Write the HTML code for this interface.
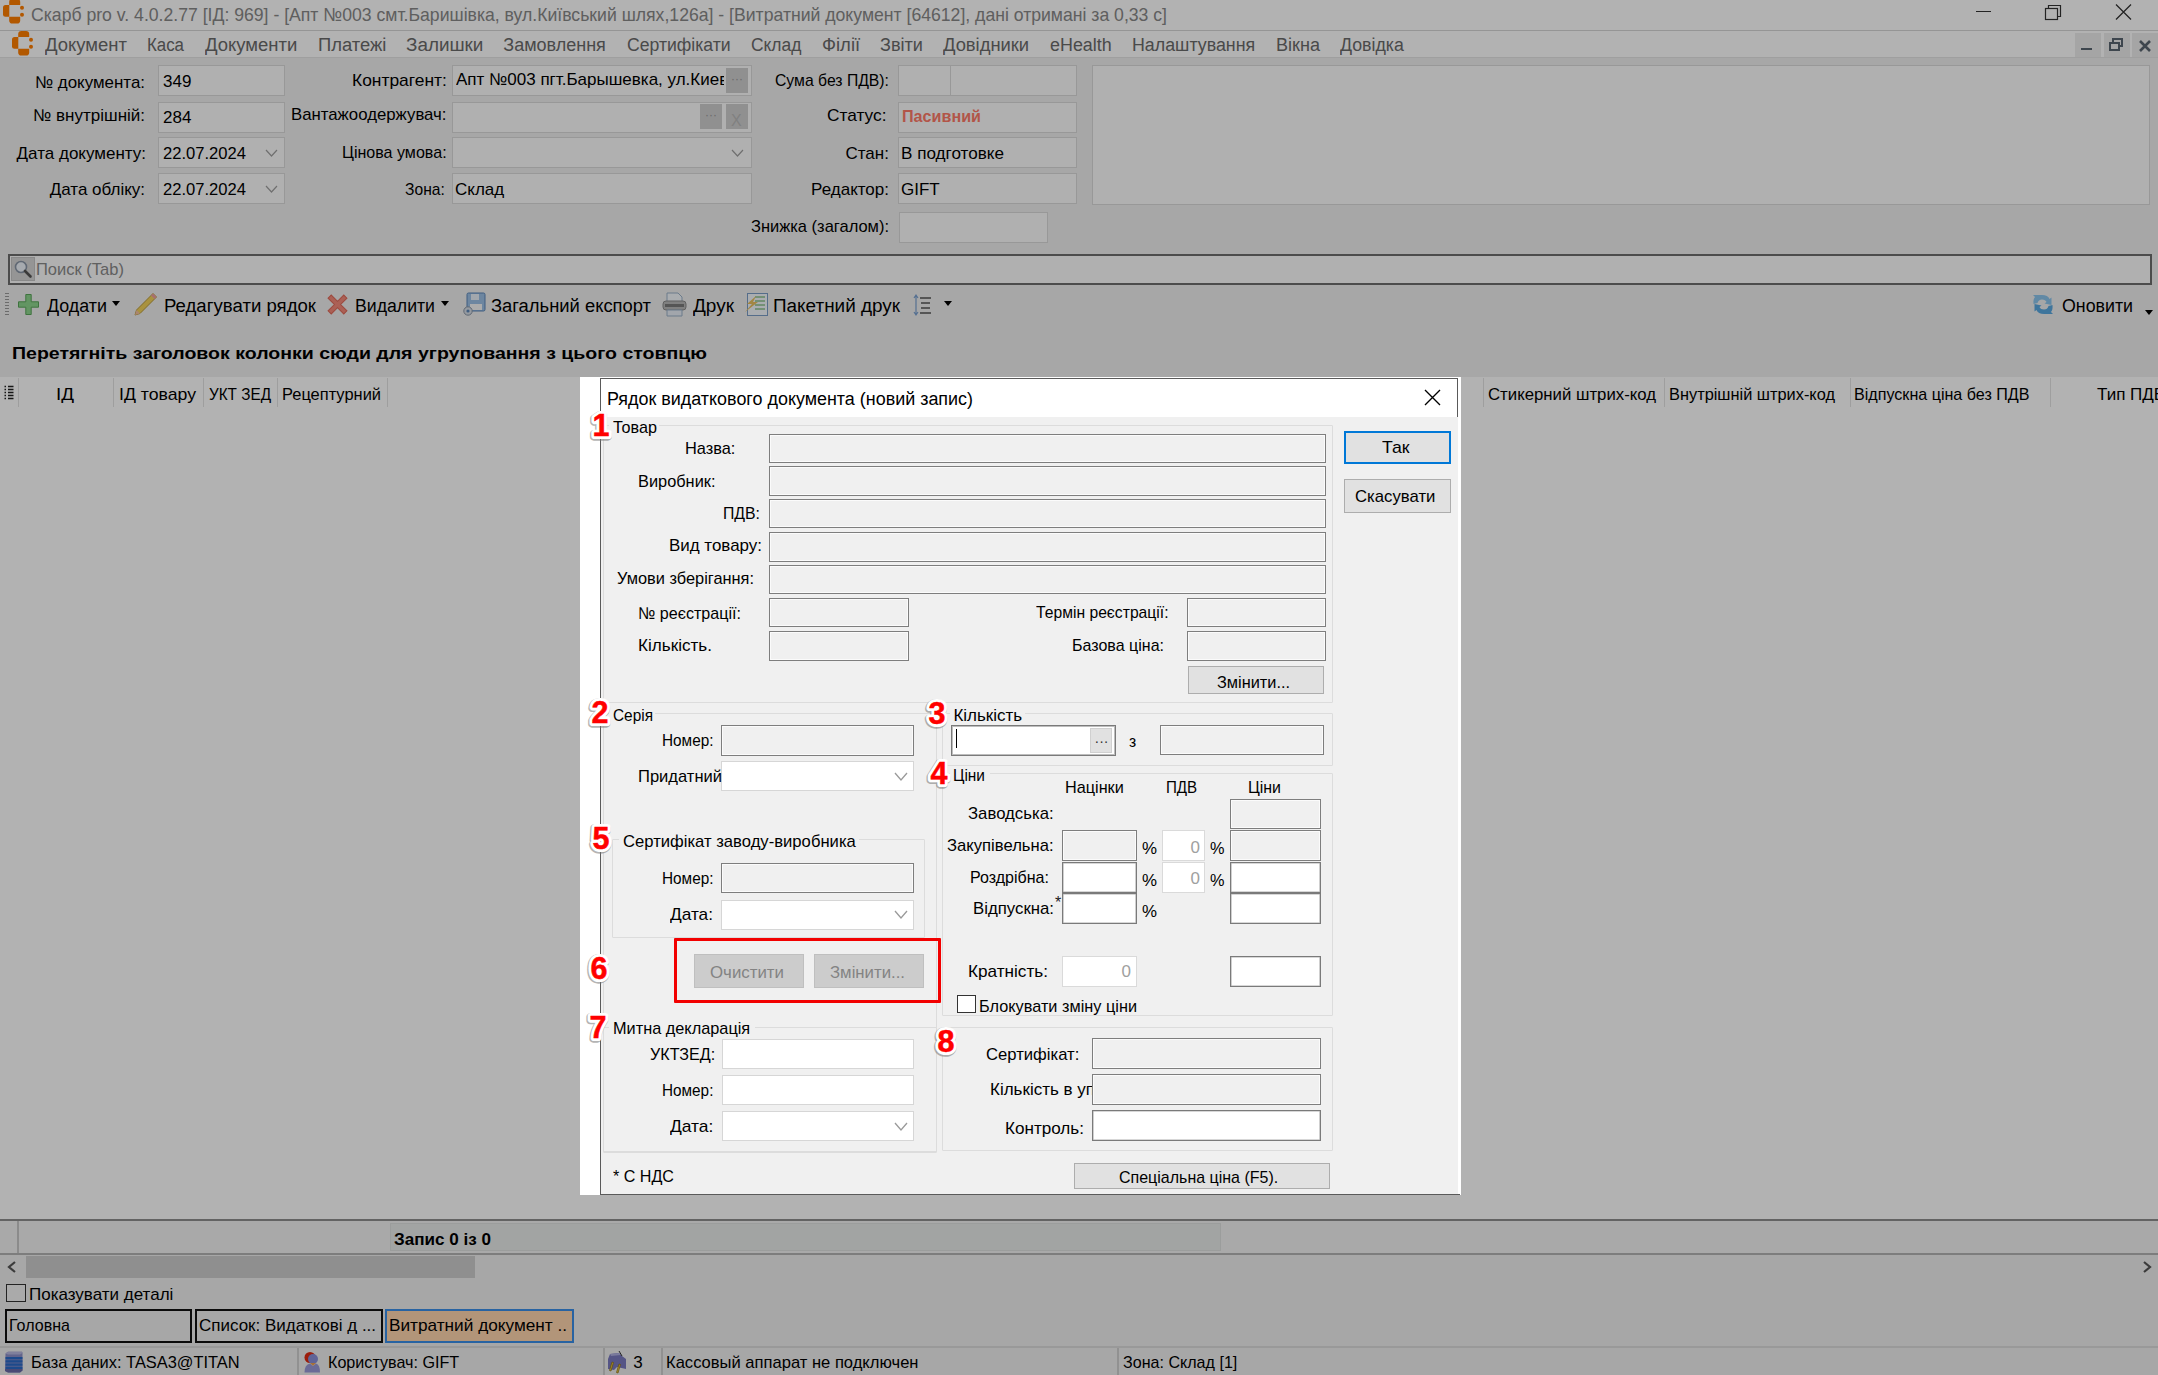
<!DOCTYPE html><html><head><meta charset="utf-8"><style>
html,body{margin:0;padding:0;}
body{width:2158px;height:1375px;position:relative;overflow:hidden;background:#f0f0f0;font-family:'Liberation Sans',sans-serif;line-height:normal;}
div{white-space:nowrap;}
</style></head><body>
<div style="position:absolute;left:0px;top:0px;width:2158px;height:30px;box-sizing:border-box;background:#fff"></div>
<div style="position:absolute;left:0px;top:30px;width:2158px;height:1px;box-sizing:border-box;background:#d6d6d6"></div>
<svg style="position:absolute;left:3.3px;top:-0.6px" width="24" height="26" viewBox="0 0 24 26"><path d="M6.2 6 V3 Q6.2 0 9.4 0 H14 Q17.2 0 17.2 3 V6z" fill="#ff7e00"/><path d="M6.3 5.9 V17.8 H2.5 Q0 17.8 0 15.3 V8.4 Q0 5.9 2.5 5.9z" fill="#ff7e00"/><path d="M6.2 17.7 V21.4 Q6.2 24.5 9.4 24.5 H14 Q17.2 24.5 17.2 21.4 V17.7z" fill="#ff7e00"/><rect x="17.0" y="6.8" width="4" height="4" rx="2" fill="#ff7e00"/><rect x="17.0" y="13.8" width="4" height="4" rx="2" fill="#ff7e00"/></svg>
<div id="t0" style="position:absolute;left:31.0px;top:4px;font-size:19px;font-weight:normal;color:#888888;transform:scaleX(0.9276);transform-origin:0 0;">Скарб pro v. 4.0.2.77 [ІД: 969] - [Апт №003 смт.Баришівка, вул.Київський шлях,126а] - [Витратний документ [64612], дані отримані за 0,33 с]</div>
<div style="position:absolute;left:1976px;top:11px;width:15px;height:1px;box-sizing:border-box;background:#333"></div>
<svg style="position:absolute;left:2043px;top:3px" width="20" height="18" viewBox="0 0 20 18"><rect x="2.5" y="5.5" width="12" height="11" fill="none" stroke="#333" stroke-width="1.2"/><path d="M5.5 5.5 V2.5 H17.5 V13.5 H14.5" fill="none" stroke="#333" stroke-width="1.2"/></svg>
<svg style="position:absolute;left:2114px;top:3px" width="19" height="18" viewBox="0 0 19 18"><path d="M2 1.5 L17 16.5 M17 1.5 L2 16.5" stroke="#333" stroke-width="1.3"/></svg>
<div style="position:absolute;left:0px;top:31px;width:2158px;height:26px;box-sizing:border-box;background:#fff"></div>
<svg style="position:absolute;left:11.8px;top:31.2px" width="24" height="26" viewBox="0 0 24 26"><path d="M6.2 6 V3 Q6.2 0 9.4 0 H14 Q17.2 0 17.2 3 V6z" fill="#ff7e00"/><path d="M6.3 5.9 V17.8 H2.5 Q0 17.8 0 15.3 V8.4 Q0 5.9 2.5 5.9z" fill="#ff7e00"/><path d="M6.2 17.7 V21.4 Q6.2 24.5 9.4 24.5 H14 Q17.2 24.5 17.2 21.4 V17.7z" fill="#ff7e00"/><rect x="17.0" y="6.8" width="4" height="4" rx="2" fill="#ff7e00"/><rect x="17.0" y="13.8" width="4" height="4" rx="2" fill="#ff7e00"/></svg>
<div id="t1" style="position:absolute;left:44.5px;top:35px;font-size:18px;font-weight:normal;color:#6a6a6a;transform:scaleX(1.0268);transform-origin:0 0;">Документ</div>
<div id="t2" style="position:absolute;left:147.0px;top:35px;font-size:18px;font-weight:normal;color:#6a6a6a;transform:scaleX(0.9363);transform-origin:0 0;">Каса</div>
<div id="t3" style="position:absolute;left:204.5px;top:35px;font-size:18px;font-weight:normal;color:#6a6a6a;transform:scaleX(1.0266);transform-origin:0 0;">Документи</div>
<div id="t4" style="position:absolute;left:317.5px;top:35px;font-size:18px;font-weight:normal;color:#6a6a6a;transform:scaleX(1.0216);transform-origin:0 0;">Платежі</div>
<div id="t5" style="position:absolute;left:405.9px;top:35px;font-size:18px;font-weight:normal;color:#6a6a6a;transform:scaleX(1.0486);transform-origin:0 0;">Залишки</div>
<div id="t6" style="position:absolute;left:503.3px;top:35px;font-size:18px;font-weight:normal;color:#6a6a6a;">Замовлення</div>
<div id="t7" style="position:absolute;left:626.8px;top:35px;font-size:18px;font-weight:normal;color:#6a6a6a;transform:scaleX(0.9790);transform-origin:0 0;">Сертифікати</div>
<div id="t8" style="position:absolute;left:751.2px;top:35px;font-size:18px;font-weight:normal;color:#6a6a6a;transform:scaleX(0.9656);transform-origin:0 0;">Склад</div>
<div id="t9" style="position:absolute;left:821.9px;top:35px;font-size:18px;font-weight:normal;color:#6a6a6a;transform:scaleX(1.0245);transform-origin:0 0;">Філії</div>
<div id="t10" style="position:absolute;left:879.5px;top:35px;font-size:18px;font-weight:normal;color:#6a6a6a;transform:scaleX(1.0039);transform-origin:0 0;">Звіти</div>
<div id="t11" style="position:absolute;left:943.1px;top:35px;font-size:18px;font-weight:normal;color:#6a6a6a;transform:scaleX(1.0201);transform-origin:0 0;">Довідники</div>
<div id="t12" style="position:absolute;left:1049.8px;top:35px;font-size:18px;font-weight:normal;color:#6a6a6a;transform:scaleX(0.9944);transform-origin:0 0;">eHealth</div>
<div id="t13" style="position:absolute;left:1132.2px;top:35px;font-size:18px;font-weight:normal;color:#6a6a6a;transform:scaleX(0.9902);transform-origin:0 0;">Налаштування</div>
<div id="t14" style="position:absolute;left:1276.1px;top:35px;font-size:18px;font-weight:normal;color:#6a6a6a;transform:scaleX(1.0036);transform-origin:0 0;">Вікна</div>
<div id="t15" style="position:absolute;left:1340.1px;top:35px;font-size:18px;font-weight:normal;color:#6a6a6a;transform:scaleX(0.9853);transform-origin:0 0;">Довідка</div>
<div style="position:absolute;left:2075px;top:33px;width:26px;height:25px;box-sizing:border-box;background:#ececec"></div>
<div style="position:absolute;left:2104px;top:33px;width:26px;height:25px;box-sizing:border-box;background:#ececec"></div>
<div style="position:absolute;left:2132px;top:33px;width:26px;height:25px;box-sizing:border-box;background:#ececec"></div>
<div style="position:absolute;left:2081px;top:47.5px;width:11px;height:2.6px;box-sizing:border-box;background:#5a6570"></div>
<svg style="position:absolute;left:2108px;top:37px" width="18" height="16" viewBox="0 0 18 16"><rect x="2" y="6" width="9" height="7" fill="none" stroke="#5a6570" stroke-width="2"/><path d="M5 5 V2 H14 V9 H12" fill="none" stroke="#5a6570" stroke-width="2"/></svg>
<svg style="position:absolute;left:2138px;top:39px" width="14" height="14" viewBox="0 0 14 14"><path d="M2 2 L12 12 M12 2 L2 12" stroke="#5a6570" stroke-width="2.6"/></svg>
<div style="position:absolute;left:0px;top:57px;width:2158px;height:1318px;box-sizing:border-box;background:#f0f0f0"></div>
<div style="position:absolute;left:0px;top:57px;width:2158px;height:1px;box-sizing:border-box;background:#e4e4e4"></div>
<div style="position:absolute;left:158px;top:65px;width:127px;height:31px;box-sizing:border-box;background:#fdfdfd;border:1.5px solid #dadada;"></div>
<div style="position:absolute;left:158px;top:101.5px;width:127px;height:31px;box-sizing:border-box;background:#fdfdfd;border:1.5px solid #dadada;"></div>
<div style="position:absolute;left:158px;top:137px;width:127px;height:31px;box-sizing:border-box;background:#fdfdfd;border:1.5px solid #dadada;"></div>
<div style="position:absolute;left:158px;top:173px;width:127px;height:31px;box-sizing:border-box;background:#fdfdfd;border:1.5px solid #dadada;"></div>
<div id="t16" style="position:absolute;left:35.0px;top:72.7px;font-size:17px;font-weight:normal;color:#000;transform:scaleX(0.9948);transform-origin:0 0;">№ документа:</div>
<div id="t17" style="position:absolute;left:33.1px;top:105.8px;font-size:17px;font-weight:normal;color:#000;">№ внутрішній:</div>
<div id="t18" style="position:absolute;left:16.6px;top:143.9px;font-size:17px;font-weight:normal;color:#000;">Дата документу:</div>
<div id="t19" style="position:absolute;left:49.7px;top:180px;font-size:17px;font-weight:normal;color:#000;">Дата обліку:</div>
<div id="t20" style="position:absolute;left:163.0px;top:72px;font-size:17px;font-weight:normal;color:#000;">349</div>
<div id="t21" style="position:absolute;left:163.0px;top:107.5px;font-size:17px;font-weight:normal;color:#000;">284</div>
<div id="t22" style="position:absolute;left:163.0px;top:144px;font-size:17px;font-weight:normal;color:#000;transform:scaleX(0.9754);transform-origin:0 0;">22.07.2024</div>
<div id="t23" style="position:absolute;left:163.0px;top:180px;font-size:17px;font-weight:normal;color:#000;transform:scaleX(0.9754);transform-origin:0 0;">22.07.2024</div>
<svg style="position:absolute;left:265px;top:149px" width="13" height="8" viewBox="0 0 13 8"><path d="M1 1 L6.5 7 L12 1" fill="none" stroke="#a0a0a0" stroke-width="1.2"/></svg>
<svg style="position:absolute;left:265px;top:185px" width="13" height="8" viewBox="0 0 13 8"><path d="M1 1 L6.5 7 L12 1" fill="none" stroke="#a0a0a0" stroke-width="1.2"/></svg>
<div style="position:absolute;left:451.5px;top:65px;width:300px;height:31px;box-sizing:border-box;background:#fdfdfd;border:1.5px solid #dadada;"></div>
<div style="position:absolute;left:451.5px;top:101.5px;width:300px;height:31px;box-sizing:border-box;background:#fdfdfd;border:1.5px solid #dadada;"></div>
<div style="position:absolute;left:451.5px;top:137px;width:300px;height:31px;box-sizing:border-box;background:#fdfdfd;border:1.5px solid #dadada;"></div>
<div style="position:absolute;left:451.5px;top:173px;width:300px;height:31px;box-sizing:border-box;background:#fdfdfd;border:1.5px solid #dadada;"></div>
<div id="t24" style="position:absolute;left:352.0px;top:71.2px;font-size:17px;font-weight:normal;color:#000;transform:scaleX(1.0235);transform-origin:0 0;">Контрагент:</div>
<div id="t25" style="position:absolute;left:290.8px;top:105.2px;font-size:17px;font-weight:normal;color:#000;transform:scaleX(0.9870);transform-origin:0 0;">Вантажоодержувач:</div>
<div id="t26" style="position:absolute;left:341.7px;top:142.6px;font-size:17px;font-weight:normal;color:#000;transform:scaleX(0.9450);transform-origin:0 0;">Цінова умова:</div>
<div id="t27" style="position:absolute;left:405.0px;top:180px;font-size:17px;font-weight:normal;color:#000;transform:scaleX(0.9192);transform-origin:0 0;">Зона:</div>
<div style="position:absolute;left:456px;top:66px;width:268px;height:28px;overflow:hidden"><div style="position:absolute;left:0;top:4px;font-size:17px;color:#000">Апт №003 пгт.Барышевка, ул.Киевский шлях</div></div>
<div id="t28" style="position:absolute;left:455.0px;top:180px;font-size:17px;font-weight:normal;color:#000;">Склад</div>
<div style="position:absolute;left:726px;top:68px;width:22px;height:25px;box-sizing:border-box;background:#cfcfcf"></div>
<div id="t29" style="position:absolute;left:731.0px;top:72px;font-size:12px;font-weight:normal;color:#9a9a9a;">···</div>
<div style="position:absolute;left:700px;top:104px;width:22px;height:25px;box-sizing:border-box;background:#cfcfcf"></div>
<div id="t30" style="position:absolute;left:705.0px;top:108px;font-size:12px;font-weight:normal;color:#9a9a9a;">···</div>
<div style="position:absolute;left:726px;top:104px;width:22px;height:25px;box-sizing:border-box;background:#cfcfcf"></div>
<div id="t31" style="position:absolute;left:731.0px;top:112px;font-size:16px;font-weight:normal;color:#b8b8b8;">X</div>
<svg style="position:absolute;left:731px;top:149px" width="13" height="8" viewBox="0 0 13 8"><path d="M1 1 L6.5 7 L12 1" fill="none" stroke="#a0a0a0" stroke-width="1.2"/></svg>
<div style="position:absolute;left:897.5px;top:65px;width:179px;height:31px;box-sizing:border-box;background:#fdfdfd;border:1.5px solid #dadada;"></div>
<div style="position:absolute;left:897.5px;top:101.5px;width:179px;height:31px;box-sizing:border-box;background:#fdfdfd;border:1.5px solid #dadada;"></div>
<div style="position:absolute;left:897.5px;top:137px;width:179px;height:31px;box-sizing:border-box;background:#fdfdfd;border:1.5px solid #dadada;"></div>
<div style="position:absolute;left:897.5px;top:173px;width:179px;height:31px;box-sizing:border-box;background:#fdfdfd;border:1.5px solid #dadada;"></div>
<div style="position:absolute;left:949.5px;top:66px;width:1.5px;height:29px;box-sizing:border-box;background:#dadada"></div>
<div id="t32" style="position:absolute;left:775.0px;top:71.3px;font-size:17px;font-weight:normal;color:#000;transform:scaleX(0.9264);transform-origin:0 0;">Сума без ПДВ):</div>
<div id="t33" style="position:absolute;left:827.0px;top:106.1px;font-size:17px;font-weight:normal;color:#000;transform:scaleX(1.0176);transform-origin:0 0;">Статус:</div>
<div id="t34" style="position:absolute;left:845.5px;top:144px;font-size:17px;font-weight:normal;color:#000;">Стан:</div>
<div id="t35" style="position:absolute;left:811.1px;top:180px;font-size:17px;font-weight:normal;color:#000;">Редактор:</div>
<div id="t36" style="position:absolute;left:751.0px;top:217px;font-size:17px;font-weight:normal;color:#000;transform:scaleX(0.9695);transform-origin:0 0;">Знижка (загалом):</div>
<div style="position:absolute;left:899px;top:212px;width:149px;height:31px;box-sizing:border-box;background:#fdfdfd;border:1.5px solid #dadada;"></div>
<div id="t37" style="position:absolute;left:901.7px;top:106.8px;font-size:17px;font-weight:bold;color:#ff7a68;transform:scaleX(0.9495);transform-origin:0 0;">Пасивний</div>
<div id="t38" style="position:absolute;left:901.0px;top:144px;font-size:17px;font-weight:normal;color:#000;transform:scaleX(1.0064);transform-origin:0 0;">В подготовке</div>
<div id="t39" style="position:absolute;left:901.0px;top:180px;font-size:17px;font-weight:normal;color:#000;">GIFT</div>
<div style="position:absolute;left:1092px;top:65px;width:1058px;height:140px;box-sizing:border-box;background:#fdfdfd;border:1.5px solid #dadada;"></div>
<div style="position:absolute;left:8px;top:254px;width:2144px;height:31px;box-sizing:border-box;background:#fdfdfd;border:2px solid #6e6e6e;"></div>
<div style="position:absolute;left:11px;top:257px;width:24px;height:24px;box-sizing:border-box;background:#d6d6d6;border:1px solid #c4c4c4"></div>
<svg style="position:absolute;left:13px;top:259px" width="20" height="20" viewBox="0 0 20 20"><circle cx="8" cy="8" r="5.5" fill="#eef4fb" stroke="#8a96a6" stroke-width="1.6"/><path d="M12 12 L17.5 17.5" stroke="#555" stroke-width="2.6" stroke-linecap="round"/></svg>
<div id="t40" style="position:absolute;left:36.0px;top:260px;font-size:17px;font-weight:normal;color:#8a8a8a;transform:scaleX(0.9717);transform-origin:0 0;">Поиск (Tab)</div>
<div style="position:absolute;left:5px;top:293px;width:4px;height:1px;box-sizing:border-box;background:#9a9a9a"></div>
<div style="position:absolute;left:5px;top:296px;width:4px;height:1px;box-sizing:border-box;background:#9a9a9a"></div>
<div style="position:absolute;left:5px;top:299px;width:4px;height:1px;box-sizing:border-box;background:#9a9a9a"></div>
<div style="position:absolute;left:5px;top:302px;width:4px;height:1px;box-sizing:border-box;background:#9a9a9a"></div>
<div style="position:absolute;left:5px;top:305px;width:4px;height:1px;box-sizing:border-box;background:#9a9a9a"></div>
<div style="position:absolute;left:5px;top:308px;width:4px;height:1px;box-sizing:border-box;background:#9a9a9a"></div>
<div style="position:absolute;left:5px;top:311px;width:4px;height:1px;box-sizing:border-box;background:#9a9a9a"></div>
<div style="position:absolute;left:5px;top:314px;width:4px;height:1px;box-sizing:border-box;background:#9a9a9a"></div>
<svg style="position:absolute;left:18px;top:294px" width="21" height="21" viewBox="0 0 21 21"><path d="M7.8 0.5 h5.4 v7.3 h7.3 v5.4 h-7.3 v7.3 h-5.4 v-7.3 h-7.3 v-5.4 h7.3z" fill="#8fd68f" stroke="#5aa55a" stroke-width="1"/></svg>
<div id="t41" style="position:absolute;left:46.5px;top:296px;font-size:18px;font-weight:normal;color:#000;transform:scaleX(0.9928);transform-origin:0 0;">Додати</div>
<svg style="position:absolute;left:112px;top:301px" width="8" height="5" viewBox="0 0 8 5"><path d="M0 0 H8 L4.0 5z" fill="#000"/></svg>
<svg style="position:absolute;left:133px;top:292px" width="25" height="25" viewBox="0 0 25 25"><path d="M20 1.5 L23.5 5 L7 21.5 L2 23 L3.5 18z" fill="#f2d25a" stroke="#b89a3a" stroke-width="1"/><path d="M20 1.5 L23.5 5 L21.5 7 L18 3.5z" fill="#f0a0a0"/><path d="M2 23 L3.5 18 L7 21.5z" fill="#f4c0a0"/></svg>
<div id="t42" style="position:absolute;left:163.5px;top:296px;font-size:18px;font-weight:normal;color:#000;transform:scaleX(1.0330);transform-origin:0 0;">Редагувати рядок</div>
<svg style="position:absolute;left:326px;top:293px" width="23" height="23" viewBox="0 0 22 22"><path d="M2 5 L5 2 L11 8 L17 2 L20 5 L14 11 L20 17 L17 20 L11 14 L5 20 L2 17 L8 11z" fill="#f58a7a" stroke="#e06a5a" stroke-width="1"/></svg>
<div id="t43" style="position:absolute;left:355.4px;top:296px;font-size:18px;font-weight:normal;color:#000;transform:scaleX(0.9823);transform-origin:0 0;">Видалити</div>
<svg style="position:absolute;left:441px;top:301px" width="8" height="5" viewBox="0 0 8 5"><path d="M0 0 H8 L4.0 5z" fill="#000"/></svg>
<svg style="position:absolute;left:462px;top:292px" width="24" height="25" viewBox="0 0 24 25"><rect x="5" y="1" width="18" height="18" rx="1.5" fill="#9cc0e6" stroke="#5b86b8" stroke-width="1"/><rect x="9" y="2" width="8" height="6" fill="#e8f0f8"/><rect x="8" y="12" width="12" height="6" fill="#f6f6f6"/><circle cx="6" cy="19" r="4.2" fill="#d6dde6" stroke="#8a96a6" stroke-width="1"/><circle cx="6" cy="19" r="1.6" fill="#5b86b8"/></svg>
<div id="t44" style="position:absolute;left:491.2px;top:296px;font-size:18px;font-weight:normal;color:#000;transform:scaleX(1.0210);transform-origin:0 0;">Загальний експорт</div>
<svg style="position:absolute;left:662px;top:292px" width="25" height="25" viewBox="0 0 25 25"><path d="M5 1 H16 L20 5 V10 H5z" fill="#f4f8fc" stroke="#9ab0c8" stroke-width="1"/><rect x="1" y="9" width="23" height="9" rx="3" fill="#b8b8b8" stroke="#8a8a8a" stroke-width="1"/><rect x="3" y="12" width="19" height="3" fill="#7a7a7a"/><path d="M5 18 H20 V24 H5z" fill="#e8eef6" stroke="#9ab0c8" stroke-width="1"/></svg>
<div id="t45" style="position:absolute;left:692.5px;top:296px;font-size:18px;font-weight:normal;color:#000;transform:scaleX(1.0547);transform-origin:0 0;">Друк</div>
<svg style="position:absolute;left:744px;top:293px" width="25" height="24" viewBox="0 0 25 24"><rect x="3.5" y="0.5" width="20" height="22" fill="#f4f8fc" stroke="#7a9cc6" stroke-width="1"/><path d="M11 4 H21 M11 8 H21 M11 12 H21 M11 16 H21" stroke="#8cc08c" stroke-width="1.5"/><path d="M12 3 L3 11 H8 L1 19 L14 9 H9z" fill="#e8c060"/></svg>
<div id="t46" style="position:absolute;left:773.4px;top:296px;font-size:18px;font-weight:normal;color:#000;transform:scaleX(1.0503);transform-origin:0 0;">Пакетний друк</div>
<svg style="position:absolute;left:913px;top:293px" width="20" height="24" viewBox="0 0 20 24"><path d="M3 2 V22 M1 5 L3 2 L5 5 M1 19 L3 22 L5 19" fill="none" stroke="#7aa0d0" stroke-width="1.2"/><path d="M7 5 H18 M8 10 H17 M8 15 H17 M7 20 H18" stroke="#555" stroke-width="1.6"/></svg>
<svg style="position:absolute;left:944px;top:301px" width="8" height="5" viewBox="0 0 8 5"><path d="M0 0 H8 L4.0 5z" fill="#000"/></svg>
<svg style="position:absolute;left:2032px;top:293px" width="22" height="23" viewBox="0 0 22 23"><path d="M1 2 H10 Q16 2 17.5 6 L19.5 4.5 L19.5 12 L12.5 10.5 L14.5 9 Q13.5 6.5 10 6.5 Q6.5 6.5 5.5 10 L1.5 11 Q1 6 3 4z" fill="#8cc4ec"/><path d="M21 21 H12 Q6 21 4.5 17 L2.5 18.5 L2.5 11 L9.5 12.5 L7.5 14 Q8.5 16.5 12 16.5 Q15.5 16.5 16.5 13 L20.5 12 Q21 17 19 19z" fill="#5aa8e0"/></svg>
<div id="t47" style="position:absolute;left:2061.6px;top:296px;font-size:18px;font-weight:normal;color:#000;transform:scaleX(0.9878);transform-origin:0 0;">Оновити</div>
<svg style="position:absolute;left:2145px;top:310px" width="8" height="5" viewBox="0 0 8 5"><path d="M0 0 H8 L4.0 5z" fill="#000"/></svg>
<div id="t48" style="position:absolute;left:12.3px;top:344.3px;font-size:17px;font-weight:bold;color:#000;transform:scaleX(1.1483);transform-origin:0 0;">Перетягніть заголовок колонки сюди для угруповання з цього стовпцю</div>
<div style="position:absolute;left:0px;top:377px;width:2158px;height:842px;box-sizing:border-box;background:#fff"></div>
<div style="position:absolute;left:17.5px;top:378px;width:1.2px;height:29px;box-sizing:border-box;background:#e2e2e2"></div>
<div style="position:absolute;left:113px;top:378px;width:1.2px;height:29px;box-sizing:border-box;background:#e2e2e2"></div>
<div style="position:absolute;left:203px;top:378px;width:1.2px;height:29px;box-sizing:border-box;background:#e2e2e2"></div>
<div style="position:absolute;left:276.5px;top:378px;width:1.2px;height:29px;box-sizing:border-box;background:#e2e2e2"></div>
<div style="position:absolute;left:387px;top:378px;width:1.2px;height:29px;box-sizing:border-box;background:#e2e2e2"></div>
<div style="position:absolute;left:1482.5px;top:378px;width:1.2px;height:29px;box-sizing:border-box;background:#e2e2e2"></div>
<div style="position:absolute;left:1663.5px;top:378px;width:1.2px;height:29px;box-sizing:border-box;background:#e2e2e2"></div>
<div style="position:absolute;left:1850px;top:378px;width:1.2px;height:29px;box-sizing:border-box;background:#e2e2e2"></div>
<div style="position:absolute;left:2049.5px;top:378px;width:1.2px;height:29px;box-sizing:border-box;background:#e2e2e2"></div>
<svg style="position:absolute;left:4px;top:385px" width="10" height="16" viewBox="0 0 10 16"><path d="M0.5 1.5 H2 M0.5 4.5 H2 M0.5 7.5 H2 M0.5 10.5 H2 M0.5 13.5 H2 M4 1.5 H9.5 M4 4.5 H9.5 M4 7.5 H9.5 M4 10.5 H9.5 M4 13.5 H9.5" stroke="#222" stroke-width="1.6"/></svg>
<div id="t49" style="position:absolute;left:55.6px;top:385px;font-size:17px;font-weight:normal;color:#000;transform:scaleX(1.1077);transform-origin:0 0;">ІД</div>
<div id="t50" style="position:absolute;left:118.6px;top:385px;font-size:17px;font-weight:normal;color:#000;transform:scaleX(1.0394);transform-origin:0 0;">ІД товару</div>
<div id="t51" style="position:absolute;left:208.5px;top:385px;font-size:17px;font-weight:normal;color:#000;transform:scaleX(0.8994);transform-origin:0 0;">УКТ ЗЕД</div>
<div id="t52" style="position:absolute;left:281.7px;top:385px;font-size:17px;font-weight:normal;color:#000;transform:scaleX(0.9670);transform-origin:0 0;">Рецептурний</div>
<div id="t53" style="position:absolute;left:1488.0px;top:385px;font-size:17px;font-weight:normal;color:#000;transform:scaleX(0.9861);transform-origin:0 0;">Стикерний штрих-код</div>
<div id="t54" style="position:absolute;left:1669.0px;top:385px;font-size:17px;font-weight:normal;color:#000;transform:scaleX(0.9627);transform-origin:0 0;">Внутрішній штрих-код</div>
<div id="t55" style="position:absolute;left:1854.0px;top:385px;font-size:17px;font-weight:normal;color:#000;transform:scaleX(0.9468);transform-origin:0 0;">Відпускна ціна без ПДВ</div>
<div id="t56" style="position:absolute;left:2097.0px;top:385px;font-size:17px;font-weight:normal;color:#000;">Тип ПДВ</div>
<div style="position:absolute;left:0px;top:1218.5px;width:2158px;height:2.5px;box-sizing:border-box;background:#8e8e8e"></div>
<div style="position:absolute;left:0px;top:1221px;width:2158px;height:32px;box-sizing:border-box;background:#f3f3f3"></div>
<div style="position:absolute;left:17px;top:1221px;width:1.5px;height:32px;box-sizing:border-box;background:#c8c8c8"></div>
<div style="position:absolute;left:390px;top:1223px;width:831px;height:28px;box-sizing:border-box;background:#e9ebea;border:1px solid #dfe1e0"></div>
<div id="t57" style="position:absolute;left:394.0px;top:1230px;font-size:17px;font-weight:bold;color:#000;transform:scaleX(1.0049);transform-origin:0 0;">Запис 0 із 0</div>
<div style="position:absolute;left:0px;top:1253px;width:2158px;height:1.5px;box-sizing:border-box;background:#b4b4b4"></div>
<div style="position:absolute;left:26px;top:1256px;width:449px;height:22px;box-sizing:border-box;background:#cdcdcd"></div>
<svg style="position:absolute;left:6px;top:1261px" width="11" height="12" viewBox="0 0 11 12"><path d="M9 1 L3 6 L9 11" fill="none" stroke="#555" stroke-width="2.2"/></svg>
<svg style="position:absolute;left:2142px;top:1261px" width="11" height="12" viewBox="0 0 11 12"><path d="M2 1 L8 6 L2 11" fill="none" stroke="#555" stroke-width="2.2"/></svg>
<div style="position:absolute;left:6px;top:1283.5px;width:19.5px;height:18.5px;box-sizing:border-box;background:#f4f4f4;border:1.5px solid #333"></div>
<div id="t58" style="position:absolute;left:29.0px;top:1285px;font-size:17px;font-weight:normal;color:#000;">Показувати деталі</div>
<div style="position:absolute;left:4.5px;top:1308.5px;width:187.5px;height:34.5px;box-sizing:border-box;background:#f0f0f0;border:2px solid #111"></div>
<div id="t59" style="position:absolute;left:9.3px;top:1316px;font-size:17px;font-weight:normal;color:#000;transform:scaleX(0.9444);transform-origin:0 0;">Головна</div>
<div style="position:absolute;left:195px;top:1308.5px;width:187.5px;height:34.5px;box-sizing:border-box;background:#f0f0f0;border:2px solid #111"></div>
<div id="t60" style="position:absolute;left:199.0px;top:1316px;font-size:17px;font-weight:normal;color:#000;">Список: Видаткові д ...</div>
<div style="position:absolute;left:385px;top:1308.5px;width:188.5px;height:34.5px;box-sizing:border-box;background:#ffd6ae;border:2px solid #3a8ee8"></div>
<div id="t61" style="position:absolute;left:389.0px;top:1316px;font-size:17px;font-weight:normal;color:#000;transform:scaleX(1.0123);transform-origin:0 0;">Витратний документ  ..</div>
<div style="position:absolute;left:0px;top:1346px;width:2158px;height:1.5px;box-sizing:border-box;background:#dcdcdc"></div>
<svg style="position:absolute;left:4px;top:1351px" width="20" height="23" viewBox="0 0 20 23"><path d="M1.5 2.5 L4 0.8 H18 L18.5 2 V19.5 L16 21.5 H4 L1 20z" fill="#8e90c8"/><path d="M1.5 2.5 L4 0.8 H18 L18.5 2 L16 3.5 H4z" fill="#b8b8e0"/><rect x="1.5" y="6" width="17" height="2.4" fill="#2a6ac8"/><rect x="1.5" y="9.2" width="17" height="2.4" fill="#2a6ac8"/><rect x="1.5" y="12.4" width="17" height="2.4" fill="#2a6ac8"/><rect x="1.5" y="15.6" width="17" height="2.4" fill="#2a6ac8"/><path d="M1 20 L4 21.5 H16 L18.5 19.5 V18 H1z" fill="#6a6aa8"/></svg>
<div id="t62" style="position:absolute;left:30.7px;top:1353px;font-size:17px;font-weight:normal;color:#000;transform:scaleX(0.9644);transform-origin:0 0;">База даних: TASA3@TITAN</div>
<div style="position:absolute;left:297px;top:1348px;width:1.5px;height:27px;box-sizing:border-box;background:#d0d0d0"></div>
<svg style="position:absolute;left:303px;top:1351px" width="18" height="23" viewBox="0 0 18 23"><circle cx="7" cy="6.5" r="5.5" fill="#e02a10"/><circle cx="10" cy="8" r="5" fill="#8a90d8"/><path d="M7 12 L10 15 L13 12z" fill="#f0a050"/><path d="M1.5 21.5 Q1.5 13.5 7 12.5 L10 15 L13 12.5 Q17 13.5 17 21.5z" fill="#9a9ad8"/></svg>
<div id="t63" style="position:absolute;left:328.3px;top:1353px;font-size:17px;font-weight:normal;color:#000;transform:scaleX(0.9491);transform-origin:0 0;">Користувач: GIFT</div>
<div style="position:absolute;left:603px;top:1348px;width:1.5px;height:27px;box-sizing:border-box;background:#d0d0d0"></div>
<svg style="position:absolute;left:606px;top:1350px" width="22" height="24" viewBox="0 0 22 24"><path d="M2 9 L4 4 L13 3 L16 6 L20 9 V19 L11 17 L8 20 L2 19z" fill="#7a7ac0"/><path d="M4 4 L13 3 L15 5 L5 6z" fill="#b0b0e0"/><path d="M13 1 L16 6" stroke="#333" stroke-width="1"/><path d="M3.5 20.5 L6 12 L7.5 12.5 L5 21z M10.5 22.5 L13 14 L14.5 14.5 L12 23z" fill="#f0d040" stroke="#8a6a10" stroke-width="0.7"/></svg>
<div id="t64" style="position:absolute;left:633.3px;top:1353px;font-size:17px;font-weight:normal;color:#000;">3</div>
<div style="position:absolute;left:661px;top:1348px;width:1.5px;height:27px;box-sizing:border-box;background:#d0d0d0"></div>
<div id="t65" style="position:absolute;left:666.0px;top:1353px;font-size:17px;font-weight:normal;color:#000;transform:scaleX(0.9740);transform-origin:0 0;">Кассовый аппарат не подключен</div>
<div style="position:absolute;left:1117px;top:1348px;width:1.5px;height:27px;box-sizing:border-box;background:#d0d0d0"></div>
<div id="t66" style="position:absolute;left:1122.7px;top:1353px;font-size:17px;font-weight:normal;color:#000;transform:scaleX(0.9458);transform-origin:0 0;">Зона: Склад [1]</div>
<div style="position:absolute;left:0px;top:0px;width:2158px;height:1375px;box-sizing:border-box;background:rgba(0,0,0,0.30)"></div>
<div style="position:absolute;left:580px;top:377px;width:881px;height:818px;box-sizing:border-box;background:#fff"></div>
<div style="position:absolute;left:600px;top:378px;width:858px;height:817px;box-sizing:border-box;background:#f0f0f0"></div>
<div style="position:absolute;left:601px;top:379px;width:856px;height:38px;box-sizing:border-box;background:#fff"></div>
<div style="position:absolute;left:600px;top:378px;width:858px;height:1.2px;box-sizing:border-box;background:#5a5a5a"></div>
<div style="position:absolute;left:600px;top:378px;width:1.2px;height:817px;box-sizing:border-box;background:#5a5a5a"></div>
<div style="position:absolute;left:1456.8px;top:378px;width:1.2px;height:39px;box-sizing:border-box;background:#5a5a5a"></div>
<div style="position:absolute;left:600px;top:1193.8px;width:860px;height:1.2px;box-sizing:border-box;background:#5a5a5a"></div>
<div id="t67" style="position:absolute;left:606.5px;top:388.5px;font-size:18px;font-weight:normal;color:#000;transform:scaleX(0.9956);transform-origin:0 0;">Рядок видаткового документа (новий запис)</div>
<svg style="position:absolute;left:1423px;top:388px" width="19" height="19" viewBox="0 0 19 19"><path d="M2 2 L17 17 M17 2 L2 17" stroke="#000" stroke-width="1.35"/></svg>
<div style="position:absolute;left:603px;top:425.3px;width:730px;height:278px;box-sizing:border-box;border:1.6px solid #dcdcdc;border-radius:1px"></div>
<div style="position:absolute;left:609px;top:420px;width:50px;height:10px;box-sizing:border-box;background:#f0f0f0"></div>
<div id="t68" style="position:absolute;left:612.8px;top:418.2px;font-size:17px;font-weight:normal;color:#000;transform:scaleX(0.9510);transform-origin:0 0;">Товар</div>
<div style="position:absolute;left:769.2px;top:433.6px;width:557px;height:29.5px;box-sizing:border-box;background:#f0f0f0;border:1.4px solid #7e7e7e;box-shadow:inset 0 0 0 1px #fbfbfb;"></div>
<div style="position:absolute;left:769.2px;top:466px;width:557px;height:29.5px;box-sizing:border-box;background:#f0f0f0;border:1.4px solid #7e7e7e;box-shadow:inset 0 0 0 1px #fbfbfb;"></div>
<div style="position:absolute;left:769.2px;top:498.9px;width:557px;height:29.5px;box-sizing:border-box;background:#f0f0f0;border:1.4px solid #7e7e7e;box-shadow:inset 0 0 0 1px #fbfbfb;"></div>
<div style="position:absolute;left:769.2px;top:532px;width:557px;height:29.5px;box-sizing:border-box;background:#f0f0f0;border:1.4px solid #7e7e7e;box-shadow:inset 0 0 0 1px #fbfbfb;"></div>
<div style="position:absolute;left:769.2px;top:564.9px;width:557px;height:29.5px;box-sizing:border-box;background:#f0f0f0;border:1.4px solid #7e7e7e;box-shadow:inset 0 0 0 1px #fbfbfb;"></div>
<div style="position:absolute;left:769.2px;top:597.6px;width:139.5px;height:29.7px;box-sizing:border-box;background:#f0f0f0;border:1.4px solid #7e7e7e;box-shadow:inset 0 0 0 1px #fbfbfb;"></div>
<div style="position:absolute;left:769.2px;top:630.9px;width:139.5px;height:30px;box-sizing:border-box;background:#f0f0f0;border:1.4px solid #7e7e7e;box-shadow:inset 0 0 0 1px #fbfbfb;"></div>
<div style="position:absolute;left:1186.7px;top:597.6px;width:139.3px;height:29.7px;box-sizing:border-box;background:#f0f0f0;border:1.4px solid #7e7e7e;box-shadow:inset 0 0 0 1px #fbfbfb;"></div>
<div style="position:absolute;left:1186.7px;top:630.9px;width:139.3px;height:30px;box-sizing:border-box;background:#f0f0f0;border:1.4px solid #7e7e7e;box-shadow:inset 0 0 0 1px #fbfbfb;"></div>
<div id="t69" style="position:absolute;left:684.6px;top:438.8px;font-size:17px;font-weight:normal;color:#000;transform:scaleX(0.9626);transform-origin:0 0;">Назва:</div>
<div id="t70" style="position:absolute;left:637.7px;top:472.4px;font-size:17px;font-weight:normal;color:#000;transform:scaleX(0.9624);transform-origin:0 0;">Виробник:</div>
<div id="t71" style="position:absolute;left:723.1px;top:503.5px;font-size:17px;font-weight:normal;color:#000;transform:scaleX(0.9297);transform-origin:0 0;">ПДВ:</div>
<div id="t72" style="position:absolute;left:669.0px;top:536.3px;font-size:17px;font-weight:normal;color:#000;transform:scaleX(0.9967);transform-origin:0 0;">Вид товару:</div>
<div id="t73" style="position:absolute;left:617.1px;top:569.4px;font-size:17px;font-weight:normal;color:#000;transform:scaleX(0.9630);transform-origin:0 0;">Умови зберігання:</div>
<div id="t74" style="position:absolute;left:637.9px;top:603.5px;font-size:17px;font-weight:normal;color:#000;transform:scaleX(0.9475);transform-origin:0 0;">№ реєстрації:</div>
<div id="t75" style="position:absolute;left:637.6px;top:636.4px;font-size:17px;font-weight:normal;color:#000;transform:scaleX(1.0062);transform-origin:0 0;">Кількість.</div>
<div id="t76" style="position:absolute;left:1036.2px;top:603.4px;font-size:17px;font-weight:normal;color:#000;transform:scaleX(0.9223);transform-origin:0 0;">Термін реєстрації:</div>
<div id="t77" style="position:absolute;left:1071.7px;top:636.4px;font-size:17px;font-weight:normal;color:#000;transform:scaleX(0.9428);transform-origin:0 0;">Базова ціна:</div>
<div style="position:absolute;left:1188.4px;top:666.4px;width:135.6px;height:28px;box-sizing:border-box;background:#e1e1e1;border:1.2px solid #adadad;"></div>
<div id="t78" style="position:absolute;left:1217.2px;top:672.5px;font-size:17px;font-weight:normal;color:#000;transform:scaleX(0.9595);transform-origin:0 0;">Змінити...</div>
<div style="position:absolute;left:1344px;top:430.7px;width:106.6px;height:33.6px;box-sizing:border-box;background:#e1e1e1;border:2.6px solid #0078d7;"></div>
<div id="t79" style="position:absolute;left:1381.7px;top:438px;font-size:17px;font-weight:normal;color:#000;transform:scaleX(1.0409);transform-origin:0 0;">Так</div>
<div style="position:absolute;left:1344px;top:478.7px;width:106.6px;height:34.1px;box-sizing:border-box;background:#e1e1e1;border:1.2px solid #adadad;"></div>
<div id="t80" style="position:absolute;left:1355.3px;top:486.8px;font-size:17px;font-weight:normal;color:#000;transform:scaleX(0.9835);transform-origin:0 0;">Скасувати</div>
<div style="position:absolute;left:603px;top:712.7px;width:334px;height:440px;box-sizing:border-box;border:1.6px solid #dcdcdc;border-radius:1px"></div>
<div style="position:absolute;left:609px;top:706px;width:46px;height:12px;box-sizing:border-box;background:#f0f0f0"></div>
<div id="t81" style="position:absolute;left:612.5px;top:706px;font-size:17px;font-weight:normal;color:#000;transform:scaleX(0.9056);transform-origin:0 0;">Серія</div>
<div style="position:absolute;left:721.4px;top:724.8px;width:193px;height:30.8px;box-sizing:border-box;background:#f0f0f0;border:1.4px solid #7e7e7e;box-shadow:inset 0 0 0 1px #fbfbfb;"></div>
<div id="t82" style="position:absolute;left:661.7px;top:731.2px;font-size:17px;font-weight:normal;color:#000;transform:scaleX(0.9025);transform-origin:0 0;">Номер:</div>
<div style="position:absolute;left:721.4px;top:761.4px;width:193px;height:30.1px;box-sizing:border-box;background:#fff;border:1.5px solid #d6d6d6;"></div>
<svg style="position:absolute;left:894px;top:772px" width="14" height="9" viewBox="0 0 14 9"><path d="M1 1 L7.0 8 L13 1" fill="none" stroke="#9a9a9a" stroke-width="1.3"/></svg>
<div id="t83" style="position:absolute;left:637.6px;top:767.2px;font-size:17px;font-weight:normal;color:#000;transform:scaleX(0.9729);transform-origin:0 0;">Придатний</div>
<div style="position:absolute;left:612px;top:838.8px;width:312.6px;height:99.5px;box-sizing:border-box;border:1.6px solid #dcdcdc;border-radius:1px"></div>
<div style="position:absolute;left:619px;top:830px;width:240px;height:14px;box-sizing:border-box;background:#f0f0f0"></div>
<div id="t84" style="position:absolute;left:623.2px;top:832.3px;font-size:17px;font-weight:normal;color:#000;transform:scaleX(0.9788);transform-origin:0 0;">Сертифікат заводу-виробника</div>
<div style="position:absolute;left:721.4px;top:862.7px;width:193px;height:30.8px;box-sizing:border-box;background:#f0f0f0;border:1.4px solid #7e7e7e;box-shadow:inset 0 0 0 1px #fbfbfb;"></div>
<div id="t85" style="position:absolute;left:661.7px;top:869.1px;font-size:17px;font-weight:normal;color:#000;transform:scaleX(0.9025);transform-origin:0 0;">Номер:</div>
<div style="position:absolute;left:721.4px;top:899.5px;width:193px;height:30px;box-sizing:border-box;background:#fff;border:1.5px solid #d6d6d6;"></div>
<svg style="position:absolute;left:894px;top:910px" width="14" height="9" viewBox="0 0 14 9"><path d="M1 1 L7.0 8 L13 1" fill="none" stroke="#9a9a9a" stroke-width="1.3"/></svg>
<div id="t86" style="position:absolute;left:670.2px;top:905px;font-size:17px;font-weight:normal;color:#000;transform:scaleX(1.0147);transform-origin:0 0;">Дата:</div>
<div style="position:absolute;left:694px;top:954px;width:109.6px;height:34.2px;box-sizing:border-box;background:#cccccc;border:1.2px solid #bfbfbf"></div>
<div id="t87" style="position:absolute;left:709.6px;top:962.7px;font-size:17px;font-weight:normal;color:#838383;transform:scaleX(0.9914);transform-origin:0 0;">Очистити</div>
<div style="position:absolute;left:814px;top:954px;width:109.6px;height:34.2px;box-sizing:border-box;background:#cccccc;border:1.2px solid #bfbfbf"></div>
<div id="t88" style="position:absolute;left:829.5px;top:962.7px;font-size:17px;font-weight:normal;color:#838383;transform:scaleX(0.9858);transform-origin:0 0;">Змінити...</div>
<div style="position:absolute;left:674.3px;top:938.3px;width:266.8px;height:64.7px;box-sizing:border-box;border:3.6px solid #f20000;border-radius:1px"></div>
<div style="position:absolute;left:603px;top:1026.6px;width:334px;height:125px;box-sizing:border-box;border:1.6px solid #dcdcdc;border-radius:1px"></div>
<div style="position:absolute;left:609px;top:1018px;width:146px;height:14px;box-sizing:border-box;background:#f0f0f0"></div>
<div id="t89" style="position:absolute;left:612.6px;top:1019px;font-size:17px;font-weight:normal;color:#000;transform:scaleX(0.9593);transform-origin:0 0;">Митна декларація</div>
<div style="position:absolute;left:721.5px;top:1038.8px;width:192.5px;height:30px;box-sizing:border-box;background:#fff;border:1.5px solid #d6d6d6;"></div>
<div style="position:absolute;left:721.5px;top:1074.8px;width:192.5px;height:29.8px;box-sizing:border-box;background:#fff;border:1.5px solid #d6d6d6;"></div>
<div style="position:absolute;left:721.5px;top:1110.8px;width:192.5px;height:30px;box-sizing:border-box;background:#fff;border:1.5px solid #d6d6d6;"></div>
<svg style="position:absolute;left:894px;top:1122px" width="14" height="9" viewBox="0 0 14 9"><path d="M1 1 L7.0 8 L13 1" fill="none" stroke="#9a9a9a" stroke-width="1.3"/></svg>
<div id="t90" style="position:absolute;left:650.3px;top:1044.9px;font-size:17px;font-weight:normal;color:#000;transform:scaleX(0.9484);transform-origin:0 0;">УКТЗЕД:</div>
<div id="t91" style="position:absolute;left:662.0px;top:1080.9px;font-size:17px;font-weight:normal;color:#000;transform:scaleX(0.9008);transform-origin:0 0;">Номер:</div>
<div id="t92" style="position:absolute;left:670.0px;top:1116.9px;font-size:17px;font-weight:normal;color:#000;transform:scaleX(1.0242);transform-origin:0 0;">Дата:</div>
<div id="t93" style="position:absolute;left:612.6px;top:1166.6px;font-size:17px;font-weight:normal;color:#000;transform:scaleX(0.9471);transform-origin:0 0;">* С НДС</div>
<div style="position:absolute;left:942px;top:712.8px;width:391px;height:53px;box-sizing:border-box;border:1.6px solid #dcdcdc;border-radius:1px"></div>
<div style="position:absolute;left:950px;top:706px;width:75px;height:12px;box-sizing:border-box;background:#f0f0f0"></div>
<div id="t94" style="position:absolute;left:953.4px;top:705.8px;font-size:17px;font-weight:normal;color:#000;">Кількість</div>
<div style="position:absolute;left:951.2px;top:725px;width:164.4px;height:30.6px;box-sizing:border-box;background:#fff;border:1px solid #7a7a7a;box-shadow:inset 0 0 0 1px #bdbdbd;"></div>
<div style="position:absolute;left:1090.4px;top:727.8px;width:22.1px;height:25px;box-sizing:border-box;background:#e1e1e1;border:1px solid #d0d0d0"></div>
<div id="t95" style="position:absolute;left:1094.5px;top:733px;font-size:14px;font-weight:normal;color:#333;">···</div>
<div style="position:absolute;left:955.6px;top:729px;width:1.6px;height:19px;box-sizing:border-box;background:#000"></div>
<div id="t96" style="position:absolute;left:1128.8px;top:731.7px;font-size:17px;font-weight:normal;color:#000;transform:scaleX(0.9234);transform-origin:0 0;">з</div>
<div style="position:absolute;left:1159.5px;top:724.8px;width:164.9px;height:30.7px;box-sizing:border-box;background:#f0f0f0;border:1.4px solid #7e7e7e;box-shadow:inset 0 0 0 1px #fbfbfb;"></div>
<div style="position:absolute;left:942px;top:772.9px;width:391px;height:243.4px;box-sizing:border-box;border:1.6px solid #dcdcdc;border-radius:1px"></div>
<div style="position:absolute;left:950px;top:766px;width:40px;height:12px;box-sizing:border-box;background:#f0f0f0"></div>
<div id="t97" style="position:absolute;left:953.4px;top:766px;font-size:17px;font-weight:normal;color:#000;transform:scaleX(0.9078);transform-origin:0 0;">Ціни</div>
<div id="t98" style="position:absolute;left:1065.2px;top:778px;font-size:17px;font-weight:normal;color:#000;transform:scaleX(0.9549);transform-origin:0 0;">Націнки</div>
<div id="t99" style="position:absolute;left:1166.0px;top:778px;font-size:17px;font-weight:normal;color:#000;transform:scaleX(0.8894);transform-origin:0 0;">ПДВ</div>
<div id="t100" style="position:absolute;left:1248.3px;top:778px;font-size:17px;font-weight:normal;color:#000;transform:scaleX(0.9362);transform-origin:0 0;">Ціни</div>
<div id="t101" style="position:absolute;left:968.4px;top:804px;font-size:17px;font-weight:normal;color:#000;transform:scaleX(0.9848);transform-origin:0 0;">Заводська:</div>
<div id="t102" style="position:absolute;left:947.4px;top:836.4px;font-size:17px;font-weight:normal;color:#000;transform:scaleX(0.9788);transform-origin:0 0;">Закупівельна:</div>
<div id="t103" style="position:absolute;left:970.4px;top:868px;font-size:17px;font-weight:normal;color:#000;transform:scaleX(0.9435);transform-origin:0 0;">Роздрібна:</div>
<div id="t104" style="position:absolute;left:973.0px;top:898.5px;font-size:17px;font-weight:normal;color:#000;transform:scaleX(0.9871);transform-origin:0 0;">Відпускна:</div>
<div id="t105" style="position:absolute;left:1055.0px;top:894px;font-size:16px;font-weight:normal;color:#222;">*</div>
<div id="t106" style="position:absolute;left:967.5px;top:961.5px;font-size:17px;font-weight:normal;color:#000;transform:scaleX(1.0093);transform-origin:0 0;">Кратність:</div>
<div style="position:absolute;left:1230.4px;top:798.5px;width:90.5px;height:30.5px;box-sizing:border-box;background:#f0f0f0;border:1.4px solid #7e7e7e;box-shadow:inset 0 0 0 1px #fbfbfb;"></div>
<div style="position:absolute;left:1230.4px;top:829.7px;width:90.5px;height:31px;box-sizing:border-box;background:#f0f0f0;border:1.4px solid #7e7e7e;box-shadow:inset 0 0 0 1px #fbfbfb;"></div>
<div style="position:absolute;left:1230.4px;top:861.6px;width:90.5px;height:31px;box-sizing:border-box;background:#fff;border:1.4px solid #7a7a7a;box-shadow:inset 0 0 0 0.6px #b0b0b0;"></div>
<div style="position:absolute;left:1230.4px;top:893px;width:90.5px;height:30.5px;box-sizing:border-box;background:#fff;border:1.4px solid #7a7a7a;box-shadow:inset 0 0 0 0.6px #b0b0b0;"></div>
<div style="position:absolute;left:1230.4px;top:956px;width:90.5px;height:30.5px;box-sizing:border-box;background:#fff;border:1.4px solid #7a7a7a;box-shadow:inset 0 0 0 0.6px #b0b0b0;"></div>
<div style="position:absolute;left:1062px;top:829.7px;width:74.5px;height:31px;box-sizing:border-box;background:#f0f0f0;border:1.4px solid #7e7e7e;box-shadow:inset 0 0 0 1px #fbfbfb;"></div>
<div style="position:absolute;left:1062px;top:861.6px;width:74.5px;height:31px;box-sizing:border-box;background:#fff;border:1.4px solid #7a7a7a;box-shadow:inset 0 0 0 0.6px #b0b0b0;"></div>
<div style="position:absolute;left:1062px;top:893px;width:74.5px;height:30.5px;box-sizing:border-box;background:#fff;border:1.4px solid #7a7a7a;box-shadow:inset 0 0 0 0.6px #b0b0b0;"></div>
<div style="position:absolute;left:1062px;top:956px;width:74.5px;height:30.5px;box-sizing:border-box;background:#fff;border:1.2px solid #dadada;"></div>
<div id="t107" style="position:absolute;left:1121.5px;top:961.5px;font-size:17px;font-weight:normal;color:#a0a0a0;">0</div>
<div style="position:absolute;left:1162.4px;top:829.7px;width:43px;height:31px;box-sizing:border-box;background:#fff;border:1.2px solid #dadada;"></div>
<div style="position:absolute;left:1162.4px;top:861.6px;width:43px;height:31px;box-sizing:border-box;background:#fff;border:1.2px solid #dadada;"></div>
<div id="t108" style="position:absolute;left:1190.5px;top:837.5px;font-size:17px;font-weight:normal;color:#a0a0a0;">0</div>
<div id="t109" style="position:absolute;left:1190.5px;top:869px;font-size:17px;font-weight:normal;color:#a0a0a0;">0</div>
<div id="t110" style="position:absolute;left:1142.0px;top:839px;font-size:17px;font-weight:normal;color:#000;transform:scaleX(0.9917);transform-origin:0 0;">%</div>
<div id="t111" style="position:absolute;left:1142.0px;top:870.5px;font-size:17px;font-weight:normal;color:#000;transform:scaleX(0.9917);transform-origin:0 0;">%</div>
<div id="t112" style="position:absolute;left:1142.0px;top:901.5px;font-size:17px;font-weight:normal;color:#000;transform:scaleX(0.9917);transform-origin:0 0;">%</div>
<div id="t113" style="position:absolute;left:1209.7px;top:839px;font-size:17px;font-weight:normal;color:#000;transform:scaleX(0.9587);transform-origin:0 0;">%</div>
<div id="t114" style="position:absolute;left:1209.7px;top:870.5px;font-size:17px;font-weight:normal;color:#000;transform:scaleX(0.9587);transform-origin:0 0;">%</div>
<div style="position:absolute;left:957px;top:995px;width:18.6px;height:18.2px;box-sizing:border-box;background:#fff;border:1.5px solid #333"></div>
<div id="t115" style="position:absolute;left:979.0px;top:996.8px;font-size:17px;font-weight:normal;color:#000;transform:scaleX(0.9584);transform-origin:0 0;">Блокувати зміну ціни</div>
<div style="position:absolute;left:942px;top:1027px;width:391px;height:124.4px;box-sizing:border-box;border:1.6px solid #dcdcdc;border-radius:1px"></div>
<div style="position:absolute;left:1092.2px;top:1038.3px;width:228.9px;height:30.5px;box-sizing:border-box;background:#f0f0f0;border:1.4px solid #7e7e7e;box-shadow:inset 0 0 0 1px #fbfbfb;"></div>
<div style="position:absolute;left:1092.2px;top:1074.3px;width:228.9px;height:30.8px;box-sizing:border-box;background:#f0f0f0;border:1.4px solid #7e7e7e;box-shadow:inset 0 0 0 1px #fbfbfb;"></div>
<div style="position:absolute;left:1092.2px;top:1110.1px;width:228.9px;height:30.8px;box-sizing:border-box;background:#fff;border:1.4px solid #7a7a7a;box-shadow:inset 0 0 0 0.6px #b0b0b0;"></div>
<div id="t116" style="position:absolute;left:986.3px;top:1044.8px;font-size:17px;font-weight:normal;color:#000;transform:scaleX(0.9794);transform-origin:0 0;">Сертифікат:</div>
<div style="position:absolute;left:980px;top:1080px;width:112px;height:22px;overflow:hidden"><div style="position:absolute;left:10px;top:0px;font-size:17px;color:#000;transform:scaleX(1.0);transform-origin:0 0">Кількість в упаковці</div></div>
<div id="t117" style="position:absolute;left:1005.0px;top:1118.6px;font-size:17px;font-weight:normal;color:#000;transform:scaleX(1.0054);transform-origin:0 0;">Контроль:</div>
<div style="position:absolute;left:1073.9px;top:1162.7px;width:256px;height:26.3px;box-sizing:border-box;background:#e1e1e1;border:1.2px solid #adadad;"></div>
<div id="t118" style="position:absolute;left:1119.4px;top:1168.2px;font-size:17px;font-weight:normal;color:#000;transform:scaleX(0.9408);transform-origin:0 0;">Спеціальна ціна (F5).</div>
<svg style="position:absolute;left:584.3px;top:405.1px;overflow:visible" width="40" height="40" viewBox="0 0 40 40"><text x="8.4" y="30.5" font-family="Liberation Sans" font-weight="bold" font-size="30.5" transform="translate(-0.6,1.2)" fill="#777" stroke="#777" stroke-width="7.4" stroke-linejoin="round" opacity="0.55">1</text><text x="8.4" y="30.5" font-family="Liberation Sans" font-weight="bold" font-size="30.5" fill="#fff" stroke="#fff" stroke-width="6.2" stroke-linejoin="round">1</text><text x="8.4" y="30.5" font-family="Liberation Sans" font-weight="bold" font-size="30.5" fill="#ff0000" stroke="#ff0000" stroke-width="0.5">1</text></svg>
<svg style="position:absolute;left:582.8px;top:692px;overflow:visible" width="40" height="40" viewBox="0 0 40 40"><text x="8.4" y="30.5" font-family="Liberation Sans" font-weight="bold" font-size="30.5" transform="translate(-0.6,1.2)" fill="#777" stroke="#777" stroke-width="7.4" stroke-linejoin="round" opacity="0.55">2</text><text x="8.4" y="30.5" font-family="Liberation Sans" font-weight="bold" font-size="30.5" fill="#fff" stroke="#fff" stroke-width="6.2" stroke-linejoin="round">2</text><text x="8.4" y="30.5" font-family="Liberation Sans" font-weight="bold" font-size="30.5" fill="#ff0000" stroke="#ff0000" stroke-width="0.5">2</text></svg>
<svg style="position:absolute;left:919.5px;top:692.8px;overflow:visible" width="40" height="40" viewBox="0 0 40 40"><text x="8.4" y="30.5" font-family="Liberation Sans" font-weight="bold" font-size="30.5" transform="translate(-0.6,1.2)" fill="#777" stroke="#777" stroke-width="7.4" stroke-linejoin="round" opacity="0.55">3</text><text x="8.4" y="30.5" font-family="Liberation Sans" font-weight="bold" font-size="30.5" fill="#fff" stroke="#fff" stroke-width="6.2" stroke-linejoin="round">3</text><text x="8.4" y="30.5" font-family="Liberation Sans" font-weight="bold" font-size="30.5" fill="#ff0000" stroke="#ff0000" stroke-width="0.5">3</text></svg>
<svg style="position:absolute;left:921.7px;top:752.9px;overflow:visible" width="40" height="40" viewBox="0 0 40 40"><text x="8.4" y="30.5" font-family="Liberation Sans" font-weight="bold" font-size="30.5" transform="translate(-0.6,1.2)" fill="#777" stroke="#777" stroke-width="7.4" stroke-linejoin="round" opacity="0.55">4</text><text x="8.4" y="30.5" font-family="Liberation Sans" font-weight="bold" font-size="30.5" fill="#fff" stroke="#fff" stroke-width="6.2" stroke-linejoin="round">4</text><text x="8.4" y="30.5" font-family="Liberation Sans" font-weight="bold" font-size="30.5" fill="#ff0000" stroke="#ff0000" stroke-width="0.5">4</text></svg>
<svg style="position:absolute;left:583.8px;top:817.9px;overflow:visible" width="40" height="40" viewBox="0 0 40 40"><text x="8.4" y="30.5" font-family="Liberation Sans" font-weight="bold" font-size="30.5" transform="translate(-0.6,1.2)" fill="#777" stroke="#777" stroke-width="7.4" stroke-linejoin="round" opacity="0.55">5</text><text x="8.4" y="30.5" font-family="Liberation Sans" font-weight="bold" font-size="30.5" fill="#fff" stroke="#fff" stroke-width="6.2" stroke-linejoin="round">5</text><text x="8.4" y="30.5" font-family="Liberation Sans" font-weight="bold" font-size="30.5" fill="#ff0000" stroke="#ff0000" stroke-width="0.5">5</text></svg>
<svg style="position:absolute;left:581.8px;top:947.9px;overflow:visible" width="40" height="40" viewBox="0 0 40 40"><text x="8.4" y="30.5" font-family="Liberation Sans" font-weight="bold" font-size="30.5" transform="translate(-0.6,1.2)" fill="#777" stroke="#777" stroke-width="7.4" stroke-linejoin="round" opacity="0.55">6</text><text x="8.4" y="30.5" font-family="Liberation Sans" font-weight="bold" font-size="30.5" fill="#fff" stroke="#fff" stroke-width="6.2" stroke-linejoin="round">6</text><text x="8.4" y="30.5" font-family="Liberation Sans" font-weight="bold" font-size="30.5" fill="#ff0000" stroke="#ff0000" stroke-width="0.5">6</text></svg>
<svg style="position:absolute;left:581px;top:1007.4000000000001px;overflow:visible" width="40" height="40" viewBox="0 0 40 40"><text x="8.4" y="30.5" font-family="Liberation Sans" font-weight="bold" font-size="30.5" transform="translate(-0.6,1.2)" fill="#777" stroke="#777" stroke-width="7.4" stroke-linejoin="round" opacity="0.55">7</text><text x="8.4" y="30.5" font-family="Liberation Sans" font-weight="bold" font-size="30.5" fill="#fff" stroke="#fff" stroke-width="6.2" stroke-linejoin="round">7</text><text x="8.4" y="30.5" font-family="Liberation Sans" font-weight="bold" font-size="30.5" fill="#ff0000" stroke="#ff0000" stroke-width="0.5">7</text></svg>
<svg style="position:absolute;left:928.8px;top:1021.3px;overflow:visible" width="40" height="40" viewBox="0 0 40 40"><text x="8.4" y="30.5" font-family="Liberation Sans" font-weight="bold" font-size="30.5" transform="translate(-0.6,1.2)" fill="#777" stroke="#777" stroke-width="7.4" stroke-linejoin="round" opacity="0.55">8</text><text x="8.4" y="30.5" font-family="Liberation Sans" font-weight="bold" font-size="30.5" fill="#fff" stroke="#fff" stroke-width="6.2" stroke-linejoin="round">8</text><text x="8.4" y="30.5" font-family="Liberation Sans" font-weight="bold" font-size="30.5" fill="#ff0000" stroke="#ff0000" stroke-width="0.5">8</text></svg></body></html>
